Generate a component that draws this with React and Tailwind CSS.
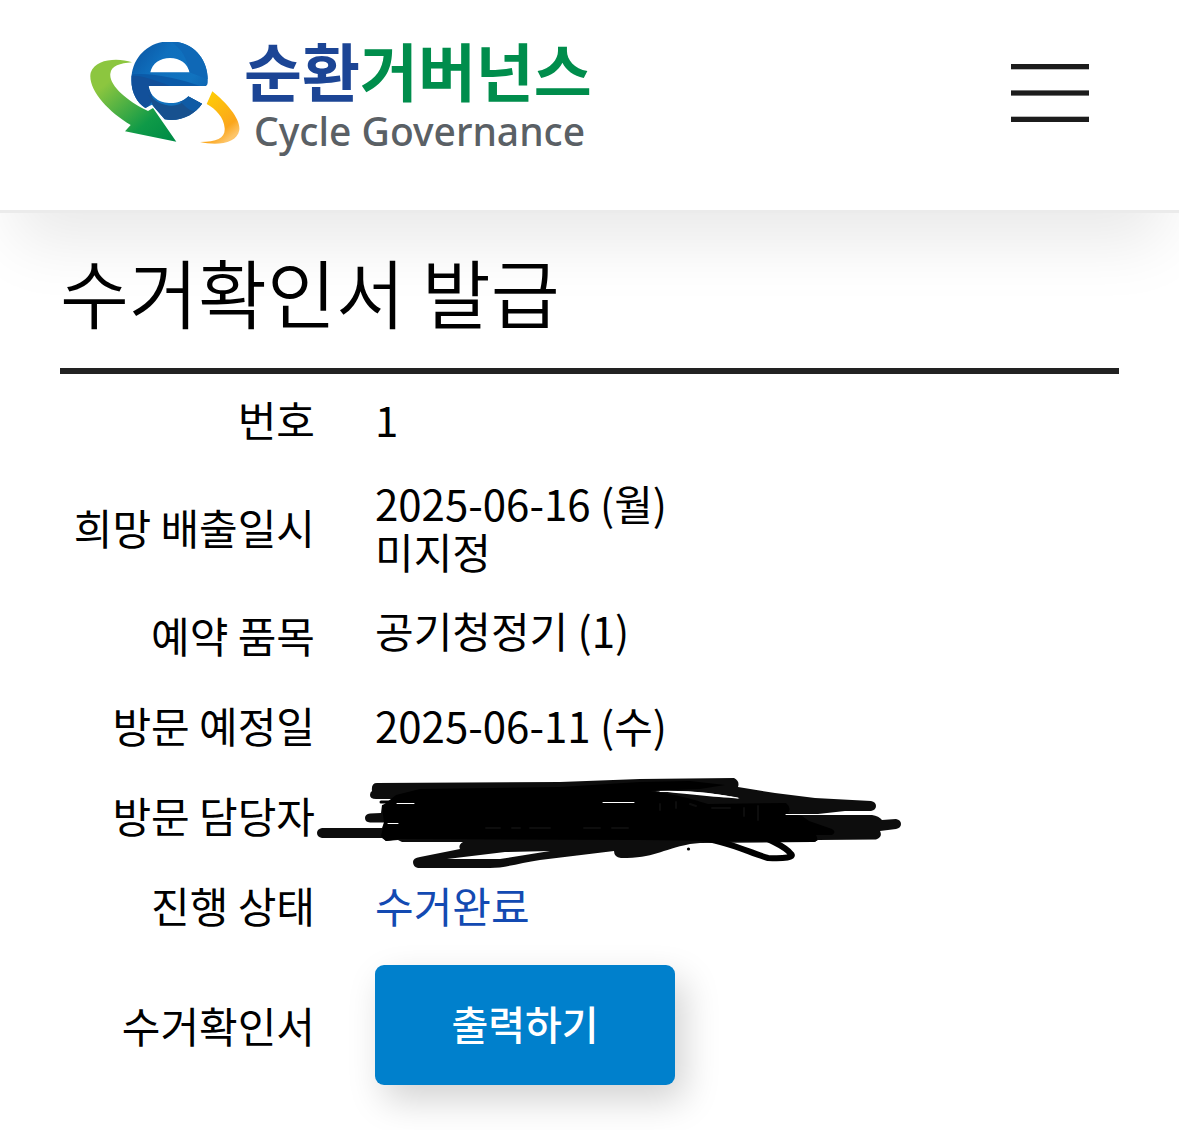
import React from "react";

function LogoMark() {
  return (
    <svg viewBox="60 36 450 333" className="h-[111px] w-[150px] shrink-0" aria-hidden="true">
      <defs>
        <linearGradient id="leaf" x1="0" y1="0" x2="0.9" y2="1">
          <stop offset="0.25" stopColor="#8cc63f" />
          <stop offset="0.75" stopColor="#0f9a48" />
          <stop offset="1" stopColor="#008c45" />
        </linearGradient>
        <linearGradient id="sun" x1="0" y1="0" x2="0.6" y2="1">
          <stop offset="0" stopColor="#ffd400" />
          <stop offset="0.8" stopColor="#fba61c" />
          <stop offset="1" stopColor="#fdc56a" />
        </linearGradient>
        <linearGradient id="sea" x1="0" y1="0" x2="1" y2="0.8">
          <stop offset="0" stopColor="#0a4f9c" />
          <stop offset="0.35" stopColor="#0f6fbd" />
          <stop offset="0.7" stopColor="#1173bf" />
          <stop offset="1" stopColor="#0b5aa8" />
        </linearGradient>
        <clipPath id="letter">
          <path
            clipRule="evenodd"
            d="M413 158C417 88 370 34 299 34C233 34 184 85 184 150C184 188 201 218 226 234L246 224L284 268C332 276 374 254 396 221L355 199C338 217 316 220 297 219C262 217 240 197 236 168L404 168Q412 168 413 158ZM241 127C247 100 270 84 300 84C330 84 352 100 359 127Z"
          />
        </clipPath>
      </defs>
      <g clipPath="url(#letter)">
        <rect x="180" y="30" width="240" height="245" fill="url(#sea)" />
        <path d="M296 30C335 55 350 80 358 127L420 150V30Z" fill="#0f68b6" />
        <path d="M180 134C240 126 330 146 390 168L180 168Z" fill="#0b5aa8" />
        <path d="M180 138C215 135 250 150 300 168H236L250 210L226 240L180 210Z" fill="#12509a" />
        <path d="M236 195C285 242 335 232 355 199L400 221L340 280H270Z" fill="#17518f" />
        <path d="M330 214L355 199L400 221L380 245C360 245 345 230 330 214Z" fill="#0f5ba5" />
      </g>
      <path
        fill="url(#leaf)"
        d="M186 97C145 83 76 86 62 128C52 176 112 244 182 285L165 304L319 335L249 234L234 243L228 240C172 212 117 166 121 131C124 107 150 100 186 97Z"
      />
      <path fill="url(#sun)" d="M427 184C472 220 512 268 508 300C501 342 440 347 390 336C442 335 466 323 464 295C462 262 437 237 410 222Z" />
    </svg>
  );
}

// marker strokes that hide the name and phone number
function Redaction() {
  return (
    <svg
      viewBox="315 770 590 100"
      className="absolute top-0 left-0 h-[100px] w-[590px] max-w-none"
      fill="none"
      strokeLinecap="round"
      strokeLinejoin="round"
      role="img"
      aria-label="가려진 내용"
    >
      <path
        fill="#0d0d0d"
        fillRule="evenodd"
        d="M377 783L560 782L640 779L734 778Q740 781 738 787L775 793L815 798L871 801Q876 802 876 806Q876 810 871 811L845 811L818 814L786 815H872Q879 816 882 820L896 819Q901 820 901 824Q901 828 896 829L880 831Q883 837 876 839.500L818 840Q816 842 812 842L700 843L690 844C660 850 655 858 621 858Q614 857 614 851L540 860C520 863 505 868 490 868H418Q413 867 413 862Q413 858 420 857L460 849Q458 845 463 842H402L398 840L386 841L382 838H322Q317 837 317 833Q317 829 322 828L382 828L384 822.500H370Q365 822 365 818Q365 814 370 813.500L381 813L382 805L392 802L391 799H376Q370 799 370 795Q370 792 372 791Q371 783 377 783ZM447 859L505 852L550 851L500 859ZM655 791C690 790 715 793 740 798.500C710 797 690 794 655 791ZM603 803L615 801.500H634L628 803.500Z"
      />
      <path
        fill="#000"
        d="M420 789L560 787L640 782L690 781L725 785L700 789L650 791C680 795 695 800 708 804L786 803Q792 808 788 813L802 816L809 821L832 829Q837 832 832 835L816 835Q820 842 812 842L640 840L400 839L386 841L381 836L384 823L382 806L396 795Z"
      />
      <g stroke="#000">
        <path strokeWidth="3" d="M381 802H430" />
        <path strokeWidth="6" d="M700 838C725 840 750 853 768 858C785 859 795 857 791 854C786 847 777 844 766 838" />
      </g>
      <g stroke="#0d0d0d" strokeWidth="2">
        <path d="M486 828H500M512 828H520M530 828H550M584 828H600M612 828H628" />
        <path d="M660 804V810M676 802V808M690 804L696 806M712 808H730M744 808V816M758 806V820" />
      </g>
      <path stroke="#fff" strokeWidth="1" d="M397 803.500H414M388 823.500H398M603 802.500H634M786 814.500H838M660 791.500C690 791 715 794 738 798" />
      <circle cx="688.500" cy="849" r="1.600" fill="#000" />
    </svg>
  );
}

function Row({ label, children, cellClass = "py-[15px]" }) {
  return (
    <tr>
      <th scope="row" className="w-[255px] py-[15px] text-right align-middle leading-[60px] font-normal whitespace-nowrap">
        {label}
      </th>
      <td className={`relative pl-[60px] align-middle leading-[48px] ${cellClass}`}>{children}</td>
    </tr>
  );
}

export default function App() {
  return (
    <div className="min-h-screen bg-white font-['Noto_Sans_CJK_KR',sans-serif] text-black">
      <header className="flex items-start justify-between border-b-3 border-[#ebebeb] bg-white px-[90px] pt-[42px] pb-[44px] shadow-[0_45px_60px_-15px_rgba(0,0,0,0.085)]">
        <a href="#" className="flex items-start gap-1">
          <LogoMark />
          <span className="flex flex-col whitespace-nowrap">
            <span className="text-[63px] leading-[54px] font-bold text-[#1c4595]">
              순환<span className="text-[#008d4c]">거버넌스</span>
            </span>
            <span className="pl-2.5 font-['Noto_Sans',sans-serif] text-[39px] leading-[70px] font-medium text-[#5a6065]">
              Cycle Governance
            </span>
          </span>
        </a>
        <button type="button" aria-label="메뉴" className="mt-[22px]">
          <svg viewBox="0 0 78 58" className="h-[58px] w-[78px]" fill="#1c1c1c">
            <rect width="78" height="5.300" />
            <rect y="26.400" width="78" height="5.200" />
            <rect y="52.700" width="78" height="5.300" />
          </svg>
        </button>
      </header>

      <main className="px-[60px] pt-[30px]">
        <h1 className="border-b-6 border-[#222] pb-[29px] text-[75px] leading-[96px] font-[350]">수거확인서 발급</h1>
        <table className="w-full text-[42px]">
          <tbody>
            <Row label="번호">1</Row>
            <Row label="희망 배출일시">
              2025-06-16 (월)
              <br />
              미지정
            </Row>
            <Row label="예약 품목" cellClass="pt-[10px] pb-[20px]">
              공기청정기 (1)
            </Row>
            <Row label="방문 예정일">2025-06-11 (수)</Row>
            <Row label="방문 담당자">
              <Redaction />
            </Row>
            <Row label="진행 상태">
              <span className="text-[#134ab2]">수거완료</span>
            </Row>
            <Row label="수거확인서">
              <button
                type="button"
                className="block h-[120px] w-[300px] rounded-[9px] bg-[#0080cc] pb-1 text-[40px] font-medium text-white shadow-[9px_15px_36px_rgba(0,0,0,0.18)]"
              >
                출력하기
              </button>
            </Row>
          </tbody>
        </table>
      </main>
    </div>
  );
}
